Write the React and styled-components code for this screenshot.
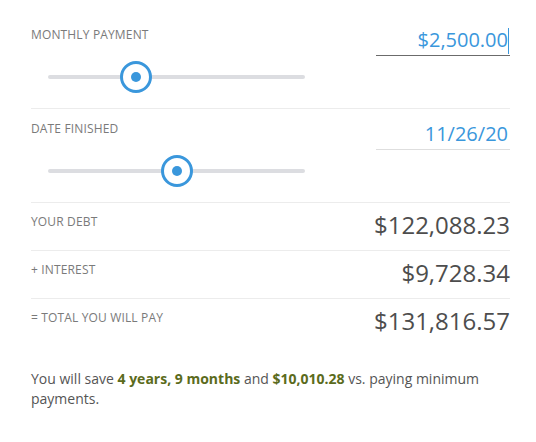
import React from "react";
import styled, { createGlobalStyle } from "styled-components";

const GlobalStyle = createGlobalStyle`
  html, body {
    margin: 0;
    padding: 0;
    background: #ffffff;
  }
  body {
    font-family: "Open Sans", "Noto Sans", sans-serif;
    -webkit-font-smoothing: antialiased;
  }
`;

const sliders = [
  { label: "MONTHLY PAYMENT", value: "$2,500.00", percent: 34.1, focused: true },
  { label: "DATE FINISHED", value: "11/26/20", percent: 50.2, focused: false },
];

const totals = [
  { label: "YOUR DEBT", value: "$122,088.23" },
  { label: "+ INTEREST", value: "$9,728.34" },
  { label: "= TOTAL YOU WILL PAY", value: "$131,816.57" },
];

const App = () => {
  return (
    <>
      <GlobalStyle />
      <Calculator>
        {sliders.map((s) => (
          <SliderRow key={s.label}>
            <Left>
              <Label>{s.label}</Label>
              <Slider>
                <Track />
                <Thumb style={{ left: `${s.percent}%` }} />
              </Slider>
            </Left>
            <Field $focused={s.focused}>
              {s.value}
              {s.focused && <Caret />}
            </Field>
          </SliderRow>
        ))}
        {totals.map((t) => (
          <TotalRow key={t.label}>
            <Label $inline>{t.label}</Label>
            <Amount>{t.value}</Amount>
          </TotalRow>
        ))}
        <Summary>
          You will save <Strong>4 years, 9 months</Strong> and{" "}
          <Strong>$10,010.28</Strong> vs. paying minimum payments.
        </Summary>
      </Calculator>
    </>
  );
};

export default App;

const Calculator = styled.div`
  width: 479px;
  margin-left: 31px;
  padding-top: 15px;
`;

const SliderRow = styled.div`
  display: flex;
  justify-content: space-between;
  align-items: flex-start;
  padding: 12px 0 15px;
  border-bottom: 1px solid #ececec;
`;

const Left = styled.div`
  display: flex;
  flex-direction: column;
`;

const Label = styled.div`
  font-size: 12px;
  line-height: 16px;
  letter-spacing: 0.15px;
  color: #7a7a7a;
  padding-top: ${(props) => (props.$inline ? "3px" : "0")};
`;

const Slider = styled.div`
  position: relative;
  margin: 18px 0 0 17px;
  width: 257px;
  height: 32px;
  display: flex;
  align-items: center;
`;

const Track = styled.div`
  width: 100%;
  height: 4px;
  border-radius: 2px;
  background: #dcdde1;
`;

const Thumb = styled.div`
  position: absolute;
  top: 0;
  box-sizing: border-box;
  width: 32px;
  height: 32px;
  margin-left: -16px;
  border: 3px solid #3a97dc;
  border-radius: 50%;
  background: #ffffff;

  &::after {
    content: "";
    position: absolute;
    top: 8px;
    left: 8px;
    width: 10px;
    height: 10px;
    border-radius: 50%;
    background: #3a97dc;
  }
`;

const Field = styled.div`
  position: relative;
  width: 132px;
  margin-top: 1px;
  height: 24px;
  padding: 0 2px 3px 0;
  font-size: 20px;
  line-height: 24px;
  color: #3a97dc;
  text-align: right;
  border-bottom: 1px solid ${(props) => (props.$focused ? "#6b6b6b" : "#dedede")};
`;

const Caret = styled.span`
  position: absolute;
  right: 1px;
  top: 0;
  width: 1px;
  height: 26px;
  background: #3a97dc;
`;

const TotalRow = styled.div`
  display: flex;
  justify-content: space-between;
  align-items: flex-start;
  padding: 8px 0 11px;
  border-bottom: 1px solid #ececec;

  &:last-of-type {
    border-bottom: none;
  }
`;

const Amount = styled.div`
  font-size: 24px;
  line-height: 28px;
  color: #4d4d4d;
`;

const Summary = styled.p`
  margin: 23px 0 0;
  font-size: 14px;
  line-height: 20px;
  color: #555555;
`;

const Strong = styled.strong`
  font-weight: 700;
  color: #5b6b1c;
`;
